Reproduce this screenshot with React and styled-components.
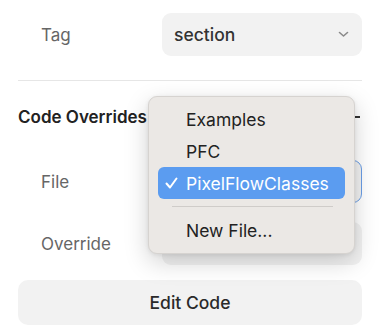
import React from 'react';
import styled, { createGlobalStyle } from 'styled-components';

const Global = createGlobalStyle`
  body {
    margin: 0;
    background: #ffffff;
    font-family: Inter, "Open Sans", sans-serif;
    -webkit-font-smoothing: antialiased;
  }
`;

const Panel = styled.div`
  position: relative;
  width: 384px;
  height: 330px;
  box-sizing: border-box;
  padding: 13px 22px 0 18px;
  display: flex;
  flex-direction: column;
  overflow: hidden;
`;

const Row = styled.div`
  display: grid;
  grid-template-columns: 144px 1fr;
  align-items: center;
  margin-top: ${p => p.$gap || 0}px;
`;

const Label = styled.span`
  padding-left: 23px;
  font-size: 17px;
  color: #666666;
`;

const Select = styled.div`
  height: 43px;
  box-sizing: border-box;
  border-radius: 9px;
  background: #f2f2f2;
  border: 1.5px solid ${p => (p.$focused ? '#6a9ee6' : 'transparent')};
  display: flex;
  align-items: center;
  justify-content: space-between;
  padding: 0 12px 0 11px;
  font-size: 17.5px;
  font-weight: 500;
  color: #333333;
`;

const Divider = styled.hr`
  border: none;
  border-top: 1px solid #e6e6e6;
  margin: 24px 0 0 0;
`;

const Header = styled.div`
  margin-top: 26px;
  height: 20px;
  display: flex;
  align-items: center;
  justify-content: space-between;
  font-size: 17px;
  font-weight: 600;
  color: #222222;
`;

const Minus = styled.span`
  width: 7px;
  height: 2px;
  background: #333;
  margin-right: 2px;
`;

const Button = styled.div`
  margin-top: 15px;
  height: 45px;
  border-radius: 10px;
  background: #f2f2f2;
  display: flex;
  align-items: center;
  justify-content: center;
  font-size: 17.5px;
  font-weight: 450;
  color: #2a2a2a;
`;

const Menu = styled.div`
  position: absolute;
  left: 148px;
  top: 96px;
  width: 207px;
  box-sizing: border-box;
  padding: 6px 9px 7px;
  background: #ebe8e5;
  border: 1px solid #d6d3d0;
  border-radius: 9px;
  box-shadow: 0 8px 24px rgba(0, 0, 0, 0.18), 0 1px 4px rgba(0, 0, 0, 0.08);
`;

const Item = styled.div`
  height: 32px;
  border-radius: 6px;
  display: flex;
  align-items: center;
  padding-left: 28px;
  position: relative;
  font-size: 17.5px;
  color: ${p => (p.$active ? '#ffffff' : '#222222')};
  background: ${p => (p.$active ? '#5b9cf0' : 'transparent')};
`;

const Check = styled.svg`
  position: absolute;
  left: 7px;
  top: 10px;
`;

const Separator = styled.div`
  height: 1px;
  background: #cfccc9;
  margin: 7px 12px 7px 14px;
`;

const Chevron = () => (
  <svg width="11" height="7" viewBox="0 0 11 7">
    <path d="M1.5 1.5 L5.5 5 L9.5 1.5" fill="none" stroke="#8a8a8a" strokeWidth="1.6" strokeLinecap="round" strokeLinejoin="round" />
  </svg>
);

export default function App() {
  return (
    <>
      <Global />
      <Panel>
        <Row>
          <Label>Tag</Label>
          <Select>
            section
            <Chevron />
          </Select>
        </Row>
        <Divider />
        <Header>
          Code Overrides
          <Minus />
        </Header>
        <Row $gap={33}>
          <Label>File</Label>
          <Select $focused />
        </Row>
        <Row $gap={19}>
          <Label>Override</Label>
          <Select />
        </Row>
        <Button>Edit Code</Button>

        <Menu>
          <Item>Examples</Item>
          <Item>PFC</Item>
          <Item $active>
            <Check width="13" height="12" viewBox="0 0 13 12">
              <path d="M1.5 6.5 L5 10.5 L11.5 1.5" fill="none" stroke="#ffffff" strokeWidth="2" strokeLinecap="round" strokeLinejoin="round" />
            </Check>
            PixelFlowClasses
          </Item>
          <Separator />
          <Item>New File...</Item>
        </Menu>
      </Panel>
    </>
  );
}
